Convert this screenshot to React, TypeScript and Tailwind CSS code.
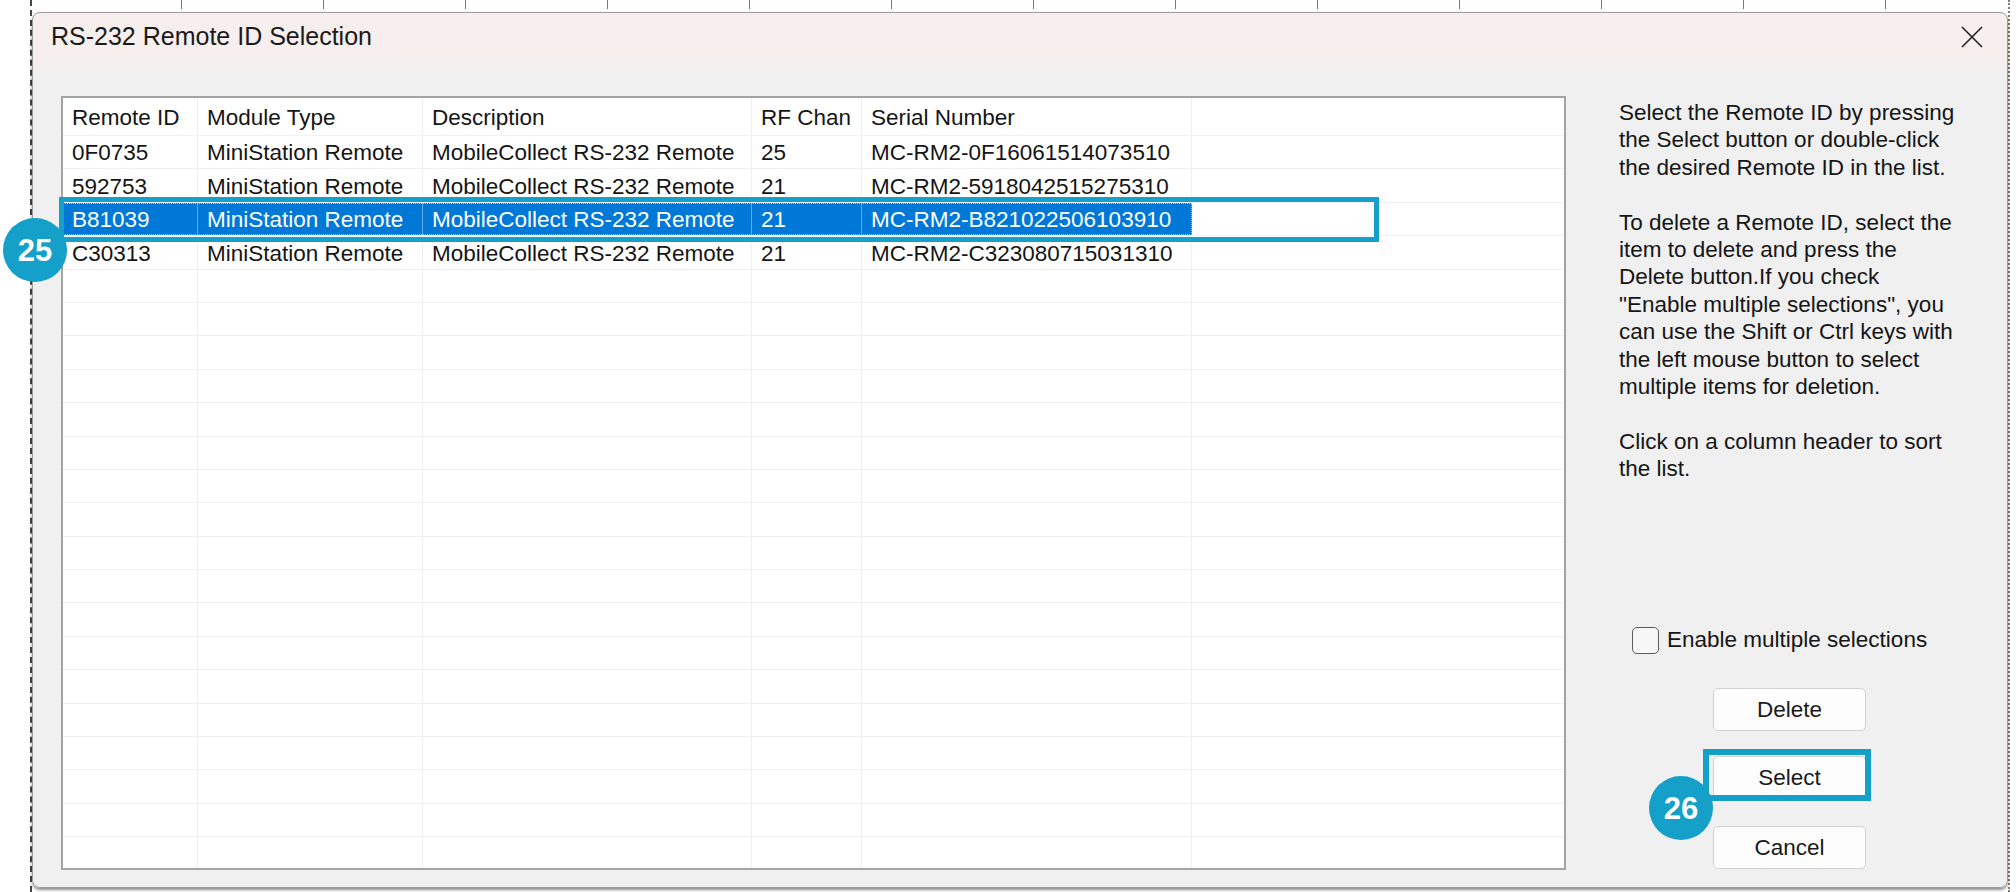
type Row = {
  id: string;
  module: string;
  desc: string;
  chan: string;
  serial: string;
  selected?: boolean;
};

const rows: Row[] = [
  { id: '0F0735', module: 'MiniStation Remote', desc: 'MobileCollect RS-232 Remote', chan: '25', serial: 'MC-RM2-0F16061514073510' },
  { id: '592753', module: 'MiniStation Remote', desc: 'MobileCollect RS-232 Remote', chan: '21', serial: 'MC-RM2-5918042515275310' },
  { id: 'B81039', module: 'MiniStation Remote', desc: 'MobileCollect RS-232 Remote', chan: '21', serial: 'MC-RM2-B821022506103910', selected: true },
  { id: 'C30313', module: 'MiniStation Remote', desc: 'MobileCollect RS-232 Remote', chan: '21', serial: 'MC-RM2-C323080715031310' },
];

const helpLines = [
  'Select the Remote ID by pressing',
  'the Select button or double-click',
  'the desired Remote ID in the list.',
  '',
  'To delete a Remote ID, select the',
  'item to delete and press the',
  'Delete button.If you check',
  '"Enable multiple selections", you',
  'can use the Shift or Ctrl keys with',
  'the left mouse button to select',
  'multiple items for deletion.',
  '',
  'Click on a column header to sort',
  'the list.',
];

function Badge({ n }: { n: string }) {
  return (
    <div className="w-[64px] h-[64px] rounded-full bg-[#14a0c9] flex items-center justify-center text-white font-bold text-[31px] leading-none">
      {n}
    </div>
  );
}

function Cell({ w, children, sel, last }: { w: string; children?: React.ReactNode; sel?: boolean; last?: boolean }) {
  return (
    <div
      className={`${w} h-full shrink-0 flex items-center pl-[9px] pt-[2px] whitespace-nowrap ${
        last ? '' : sel ? 'border-r border-[#6aaae4]' : 'border-r border-[#efefef]'
      }`}
    >
      {children}
    </div>
  );
}

export default function App() {
  return (
    <div className="w-[2016px] h-[892px] bg-white overflow-hidden flex flex-col font-['Liberation_Sans',Arial,sans-serif] text-[#151515]">
      {/* sliver of the window behind the dialog */}
      <div className="h-[12px] flex pl-[40px]">
        {Array.from({ length: 14 }).map((_, i) => (
          <div key={i} className="w-[142px] h-[9px] border-r border-[#777] shrink-0" />
        ))}
      </div>

      <div className="flex flex-1 min-h-0">
        <div className="w-[32px] shrink-0 border-r-2 border-dashed border-[#444] -mt-[12px]" />

        {/* dialog */}
        <div className="relative w-[1976px] h-[876px] shrink-0 rounded-[8px] border border-[#9c9c9c] shadow-[0_2px_3px_rgba(0,0,0,0.45)] bg-[linear-gradient(to_bottom,#f7eeee_0px,#f7eeee_40px,#f0f0f0_66px)] flex flex-col">
          <div className="h-[48px] flex items-center pl-[18px] pr-[24px] shrink-0">
            <span className="text-[25px] text-[#1a1a1a]">RS-232 Remote ID Selection</span>
            <svg className="ml-auto w-[22px] h-[22px]" viewBox="0 0 22 22" fill="none" stroke="#222" strokeWidth="1.6">
              <path d="M1 1L21 21M21 1L1 21" />
            </svg>
          </div>

          <div className="flex pt-[35px] pl-[28px] text-[22.5px]">
            {/* list view */}
            <div className="w-[1505px] h-[774px] border-2 border-[#a3a3a3] bg-white overflow-hidden shrink-0">
              <div className="h-[38px] flex border-b border-[#f3f3f3]">
                <Cell w="w-[135px]">Remote ID</Cell>
                <Cell w="w-[225px]">Module Type</Cell>
                <Cell w="w-[329px]">Description</Cell>
                <Cell w="w-[110px]">RF Chan</Cell>
                <Cell w="w-[330px]">Serial Number</Cell>
                <Cell w="flex-1" last />
              </div>
              {Array.from({ length: 22 }).map((_, i) => {
                const r = rows[i];
                const sel = !!r?.selected;
                return (
                  <div key={i} className="h-[33.4px] flex border-b border-[#f0f0f0]">
                    <div
                      className={`flex h-full ${sel ? 'bg-[#0078d7] text-white outline-1 outline-dotted outline-[#9fc6ea] -outline-offset-1' : ''}`}
                    >
                      <Cell w="w-[135px]" sel={sel}>{r?.id}</Cell>
                      <Cell w="w-[225px]" sel={sel}>{r?.module}</Cell>
                      <Cell w="w-[329px]" sel={sel}>{r?.desc}</Cell>
                      <Cell w="w-[110px]" sel={sel}>{r?.chan}</Cell>
                      <Cell w="w-[330px]" sel={sel} last={sel}>{r?.serial}</Cell>
                    </div>
                    <div className="flex-1" />
                  </div>
                );
              })}
            </div>

            {/* help + actions */}
            <div className="ml-[53px] w-[380px] h-[774px] flex flex-col">
              <div className="pt-[3px]">
                {helpLines.map((l, i) => (
                  <div key={i} className="h-[27.4px] leading-[27.4px] whitespace-nowrap">
                    {l}
                  </div>
                ))}
              </div>

              <div className="mt-auto flex flex-col">
                <label className="flex items-center gap-2 pl-[13px] h-[28px]">
                  <span className="w-[27px] h-[27px] rounded-[5px] border-[1.5px] border-[#5c5c5c] bg-[#f7f7f7]" />
                  <span>Enable multiple selections</span>
                </label>
                <button className="ml-[94px] mt-[34px] w-[153px] h-[43px] rounded-[5px] border border-[#d2d2d2] bg-[#fdfdfd] text-[#1a1a1a]">
                  Delete
                </button>
                <button className="ml-[94px] mt-[25px] w-[153px] h-[43px] rounded-[5px] border border-[#d2d2d2] bg-[#fdfdfd] text-[#1a1a1a]">
                  Select
                </button>
                <button className="ml-[94px] mt-[27px] mb-[1px] w-[153px] h-[43px] rounded-[5px] border border-[#d2d2d2] bg-[#fdfdfd] text-[#1a1a1a]">
                  Cancel
                </button>
              </div>
            </div>
          </div>
        </div>

        <div className="w-[8px] shrink-0 border-l-2 border-dotted border-[#8a7a6a] -mt-[12px]" />
      </div>

      {/* callouts drawn over the dialog */}
      <div className="absolute left-[59px] top-[197px] w-[1320px] h-[45px] border-[5px] border-[#14a0c9]" />
      <div className="absolute left-[3px] top-[218px]">
        <Badge n="25" />
      </div>
      <div className="absolute left-[1703px] top-[749px] w-[168px] h-[52px] border-[6px] border-[#14a0c9]" />
      <div className="absolute left-[1649px] top-[776px]">
        <Badge n="26" />
      </div>
    </div>
  );
}
